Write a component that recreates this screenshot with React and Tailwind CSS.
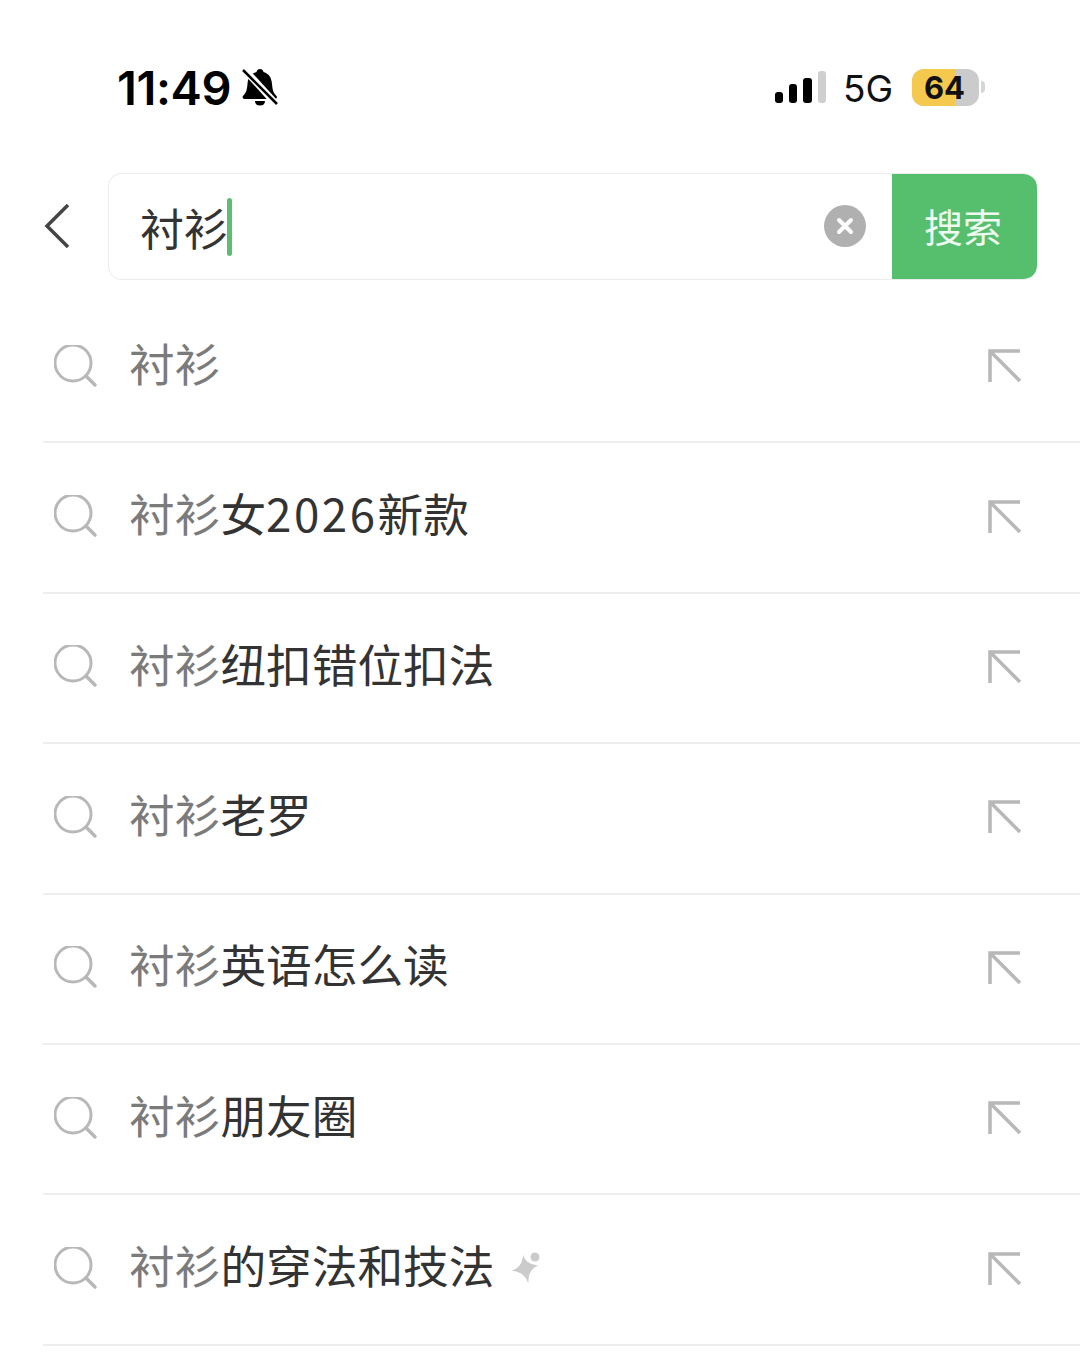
const CJK = "font-['Noto_Sans_CJK_SC','Noto_Sans_CJK_JP',sans-serif]";

const rows = [
  { rest: [] },
  { rest: ["女", <span key="y" className="tracking-[2.5px]">2026</span>, "新款"] },
  { rest: ["纽扣错位扣法"] },
  { rest: ["老罗"] },
  { rest: ["英语怎么读"] },
  { rest: ["朋友圈"] },
  { rest: ["的穿法和技法"], sparkle: true },
];

function SearchIcon() {
  return (
    <svg width="44" height="44" viewBox="0 0 44 44" fill="none" className="mb-[1px] shrink-0">
      <circle cx="19" cy="18" r="18" stroke="#b8b8b8" strokeWidth="3" />
      <path d="M32 31l9 9" stroke="#b8b8b8" strokeWidth="3.5" strokeLinecap="round" />
    </svg>
  );
}

function FillArrow() {
  return (
    <svg width="36" height="36" viewBox="0 0 36 36" fill="none" className="mb-[2px]">
      <path d="M33 3H3v31M3 3l30 30" stroke="#b8b8b8" strokeWidth="3.5" />
    </svg>
  );
}

function Sparkle() {
  return (
    <svg width="30" height="32" viewBox="0 0 30 32" className="ml-[17px] mt-[4px]">
      <path d="M10 4c2 5 5 9 16 9-7 4-9 9-8 19-3-7-8-11-18-11 7-3 10-8 10-17z" fill="#cbcbcb" transform="rotate(6 12 16)" />
      <circle cx="23" cy="6" r="4.500" fill="#cbcbcb" />
    </svg>
  );
}

function StatusBar() {
  return (
    <div className="flex h-[174px] items-center justify-between pl-[117px] pr-[95px] text-black">
      <div className="flex items-center">
        <span className="font-['Inter',sans-serif] text-[47px] font-semibold leading-none tracking-[-0.4px]">11:49</span>
        <svg width="36" height="38" viewBox="0 0 36 38" className="ml-[11px]">
          <path d="M18 1c2 0 3 1 3.500 3 6 2 8 6 8.500 12 .5 6 1.500 9 4.500 12 1 1.500 0 3-2 3H3c-2 0-3-1.500-2-3 3-3 4-6 4.500-12C6 10 8 6 14.500 4 15 2 16 1 18 1z" fill="#000" />
          <path d="M13 33h10c0 3-2 4.500-5 4.500s-5-1.500-5-4.500z" fill="#000" />
          <path d="M2 1l32 35" stroke="#fff" strokeWidth="7" />
          <path d="M1 2l34 34" stroke="#000" strokeWidth="2.500" />
        </svg>
      </div>
      <div className="flex items-center">
        <div className="flex h-[32px] items-end gap-[6px]">
          <div className="h-[11px] w-[8px] rounded-[3px] bg-black" />
          <div className="h-[19px] w-[8px] rounded-[3px] bg-black" />
          <div className="h-[25px] w-[9px] rounded-[3px] bg-black" />
          <div className="h-[32px] w-[8px] rounded-[3px] bg-[#cfcfcf]" />
        </div>
        <span className="ml-[17px] mt-[2px] font-['Inter',sans-serif] text-[37px] leading-none text-[#111]">5G</span>
        <div className="relative ml-[19px] mt-[1px] flex h-[37px] w-[67px] items-center justify-center overflow-hidden rounded-[12px] bg-[#cbcbcb]">
          <div className="absolute inset-y-0 left-0 w-[43px] bg-[#f5c94e]" />
          <span className="relative pr-[2px] font-['Inter',sans-serif] text-[31px] font-bold leading-none text-[#111]">64</span>
        </div>
        <div className="ml-[2px] h-[12px] w-[4px] rounded-r-full bg-[#d5d5d5]" />
      </div>
    </div>
  );
}

function SearchBar() {
  return (
    <div className="mt-[-1px] flex h-[107px] items-center pl-[44px] pr-[43px]">
      <svg width="28" height="48" viewBox="0 0 28 48" fill="none" className="mb-[1px] shrink-0">
        <path d="M24 3L3 24l21 21" stroke="#444" strokeWidth="3.500" />
      </svg>
      <div className="ml-[36px] flex h-full flex-1 items-stretch overflow-hidden rounded-[14px] border border-[#ececec] border-r-0">
        <div className="flex flex-1 items-center pl-[31px] pr-[26px]">
          <span className="text-[44px] leading-none text-[#333]">衬衫</span>
          <div className="ml-[-1px] h-[58px] w-[5px] rounded-full bg-[#5dbd72]" />
          <div className="mb-[1px] ml-auto flex h-[42px] w-[42px] items-center justify-center rounded-full bg-[#b0b0b0]">
            <svg width="18" height="18" viewBox="0 0 18 18" fill="none">
              <path d="M3 3l12 12M15 3L3 15" stroke="#fff" strokeWidth="4" strokeLinecap="round" />
            </svg>
          </div>
        </div>
        <div className="flex w-[145px] items-center justify-center rounded-r-[12px] bg-[#55bf6e] pb-[3px] pr-[3px] text-[39px] leading-none text-[#eefaf0]">
          搜索
        </div>
      </div>
    </div>
  );
}

export default function App() {
  return (
    <div className={`h-[1359px] w-[1080px] overflow-hidden bg-white ${CJK}`}>
      <StatusBar />
      <SearchBar />
      <div className="mt-[13px] ml-[43px]">
        {rows.map((row, i) => (
          <div key={i} className="flex h-[150.4px] items-center border-b-2 border-[#eeeeee] pl-[11px] pr-[57px]">
            <SearchIcon />
            <div className="ml-[31px] flex flex-1 items-center pb-[9px] text-[45.7px] leading-none text-[#333]">
              <span className="text-[#7b7b7b]">衬衫</span>
              {row.rest}
              {row.sparkle && <Sparkle />}
            </div>
            <FillArrow />
          </div>
        ))}
      </div>
    </div>
  );
}
